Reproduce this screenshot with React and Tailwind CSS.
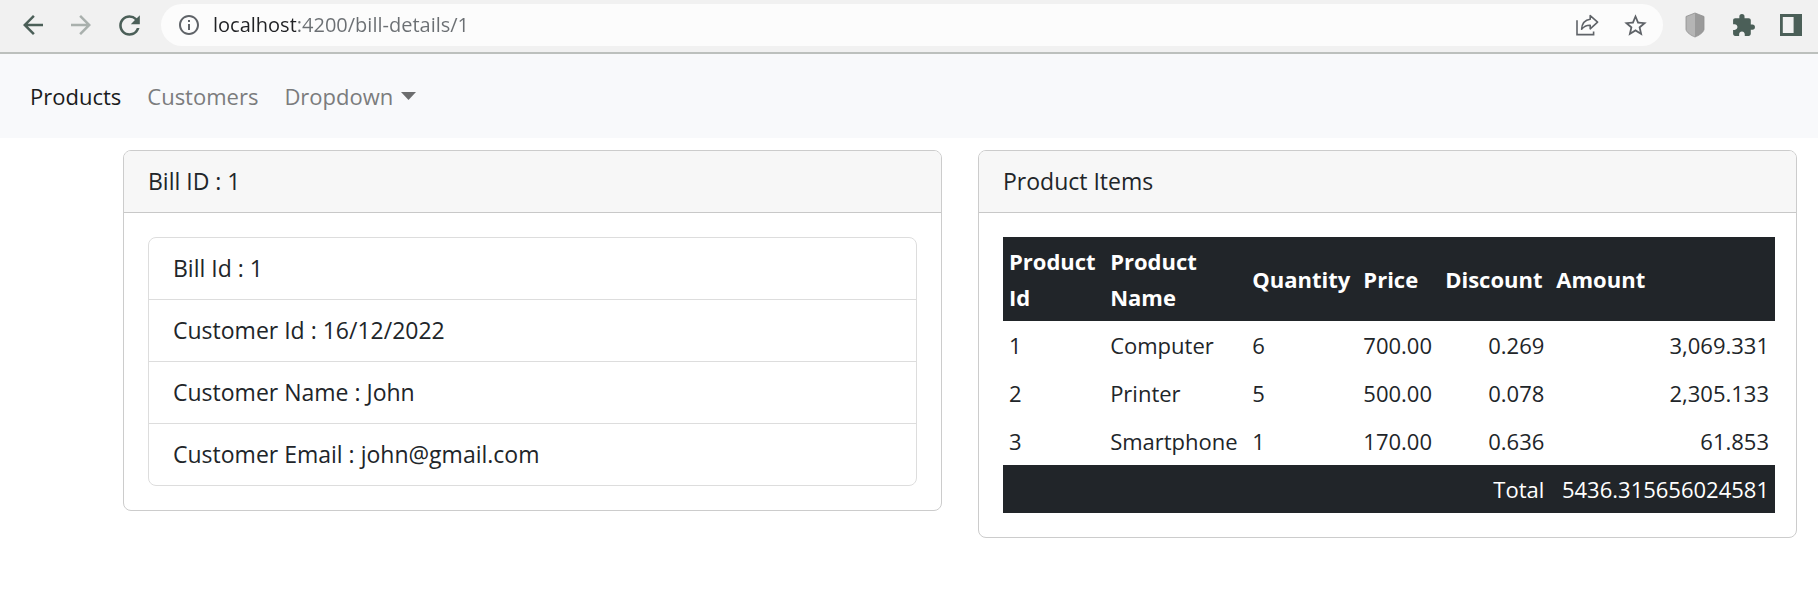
import React from "react";
import {
  MdArrowBack,
  MdArrowForward,
  MdExtension,
  MdInfoOutline,
  MdRefresh,
  MdStarBorder,
} from "react-icons/md";

const details = [
  "Bill Id : 1",
  "Customer Id : 16/12/2022",
  "Customer Name : John",
  "Customer Email : john@gmail.com",
];

const items = [
  { id: 1, name: "Computer", quantity: 6, price: "700.00", discount: "0.269", amount: "3,069.331" },
  { id: 2, name: "Printer", quantity: 5, price: "500.00", discount: "0.078", amount: "2,305.133" },
  { id: 3, name: "Smartphone", quantity: 1, price: "170.00", discount: "0.636", amount: "61.853" },
];

function ToolButton({ label, className = "text-[#4b5f58]", children }) {
  return (
    <button
      type="button"
      aria-label={label}
      className={"flex h-10 w-12 shrink-0 items-center justify-center " + className}
    >
      {children}
    </button>
  );
}

function ShareIcon() {
  return (
    <svg width="24" height="24" viewBox="0 0 24 24" fill="none" stroke="currentColor" strokeWidth="1.6">
      <path d="M2 7.2V21.6H18.6V18.4" />
      <path
        d="M15.2 2.6 22.6 9.2 15.2 15.8V12.2C11.6 12 9 13.3 6.6 16.2 7 10.6 10 6.8 15.2 6.2Z"
        strokeLinejoin="round"
      />
    </svg>
  );
}

function ShieldIcon() {
  return (
    <svg width="20" height="26" viewBox="0 0 20 26">
      <path d="M10 1 19 4.5V17.5C18.4 20.5 14 23.5 10 25Z" fill="#9a9a9a" />
      <path d="M10 1 1 4.5V17.5C1.6 20.5 6 23.5 10 25Z" fill="#b5b5b5" />
      <path
        d="M10 1 19 4.5V17.5C18.4 20.5 14 23.5 10 25 6 23.5 1.6 20.5 1 17.5V4.5Z"
        fill="none"
        stroke="#8f8f8f"
        strokeWidth="0.8"
      />
    </svg>
  );
}

function PanelIcon() {
  return (
    <svg width="22" height="22" viewBox="0 0 22 22">
      <path d="M0 0H22V22H0ZM2.8 3V19H13.6V3Z" fill="currentColor" fillRule="evenodd" />
    </svg>
  );
}

function BrowserBar() {
  return (
    <div className="flex items-center gap-2 border-b-2 border-[#bcc0bd] bg-[#f1f1f1] pt-1 pr-[3px] pb-1.5 pl-[9px]">
      <div className="flex">
        <ToolButton label="Back"><MdArrowBack size={30} /></ToolButton>
        <ToolButton label="Forward" className="text-[#a9b0ad]"><MdArrowForward size={30} /></ToolButton>
        <ToolButton label="Reload"><MdRefresh size={31} /></ToolButton>
      </div>
      <div className="flex h-[42px] grow items-center rounded-full bg-[#fcfcfc] pr-1 pl-4">
        <MdInfoOutline size={24} className="shrink-0 text-[#5f6368]" />
        <input
          type="text"
          aria-label="Address"
          defaultValue="localhost:4200/bill-details/1"
          className="ml-3 min-w-0 grow bg-[linear-gradient(to_right,#202124_83px,#6b6f73_83px)] bg-clip-text text-[20px] leading-7 text-transparent outline-none"
        />
        <ToolButton label="Share" className="text-[#5f6368]"><ShareIcon /></ToolButton>
        <ToolButton label="Bookmark" className="text-[#5f6368]"><MdStarBorder size={27} /></ToolButton>
      </div>
      <div className="flex">
        <ToolButton label="Shield"><ShieldIcon /></ToolButton>
        <ToolButton label="Extensions"><MdExtension size={25} /></ToolButton>
        <ToolButton label="Side panel"><PanelIcon /></ToolButton>
      </div>
    </div>
  );
}

function Navbar() {
  return (
    <nav className="flex items-center gap-0.5 bg-[#f8f9fb] px-[18px] py-6">
      <a href="#products" className="px-3 text-[#1a1b1c]">Products</a>
      <a href="#customers" className="px-3 text-[#7b7c7d]">Customers</a>
      <button type="button" className="flex items-center gap-2 px-3 text-[#7b7c7d]">
        Dropdown
        <svg width="15" height="8" viewBox="0 0 15 8" fill="#6c6d6e">
          <path d="M0 0H15L7.5 8Z" />
        </svg>
      </button>
    </nav>
  );
}

function Card({ title, bodyClass = "p-6", children }) {
  return (
    <section className="min-w-0 flex-1 overflow-hidden rounded-lg border border-[#cccccc] bg-white">
      <h2 className="border-b border-[#c8c8c8] bg-[#f7f7f7] px-6 py-3 text-[23px] leading-[37px]">{title}</h2>
      <div className={bodyClass}>{children}</div>
    </section>
  );
}

export default function App() {
  return (
    <div className="min-h-screen bg-white font-['Open_Sans','Noto_Sans',sans-serif] text-[22px] leading-9 text-[#212529]">
      <BrowserBar />
      <Navbar />
      <main className="flex items-start gap-9 pt-3 pr-[21px] pl-[123px]">
        <Card title="Bill ID : 1">
          <ul className="divide-y divide-[#dddddd] rounded-lg border border-[#dddddd] text-[23px]">
            {details.map((line) => (
              <li key={line} className="px-6 py-3 leading-[37px]">{line}</li>
            ))}
          </ul>
        </Card>
        <Card title="Product Items" bodyClass="py-6 pr-[21px] pl-6">
          <table className="w-full table-fixed border-collapse">
            <colgroup>
              <col className="w-[13.1%]" />
              <col className="w-[18.4%]" />
              <col className="w-[14.4%]" />
              <col className="w-[10.6%]" />
              <col className="w-[14.4%]" />
              <col />
            </colgroup>
            <thead className="bg-[#212529] text-left text-white">
              <tr>
                <th className="p-1.5">Product Id</th>
                <th className="p-1.5"><span className="block w-min">Product Name</span></th>
                <th className="p-1.5">Quantity</th>
                <th className="p-1.5">Price</th>
                <th className="p-1.5">Discount</th>
                <th className="p-1.5">Amount</th>
              </tr>
            </thead>
            <tbody>
              {items.map((item) => (
                <tr key={item.id}>
                  <td className="p-1.5">{item.id}</td>
                  <td className="p-1.5">{item.name}</td>
                  <td className="p-1.5">{item.quantity}</td>
                  <td className="p-1.5">{item.price}</td>
                  <td className="p-1.5 text-right">{item.discount}</td>
                  <td className="p-1.5 text-right">{item.amount}</td>
                </tr>
              ))}
            </tbody>
            <tfoot className="bg-[#212529] text-right text-white">
              <tr>
                <td colSpan={5} className="p-1.5">Total</td>
                <td className="p-1.5">5436.315656024581</td>
              </tr>
            </tfoot>
          </table>
        </Card>
      </main>
    </div>
  );
}
